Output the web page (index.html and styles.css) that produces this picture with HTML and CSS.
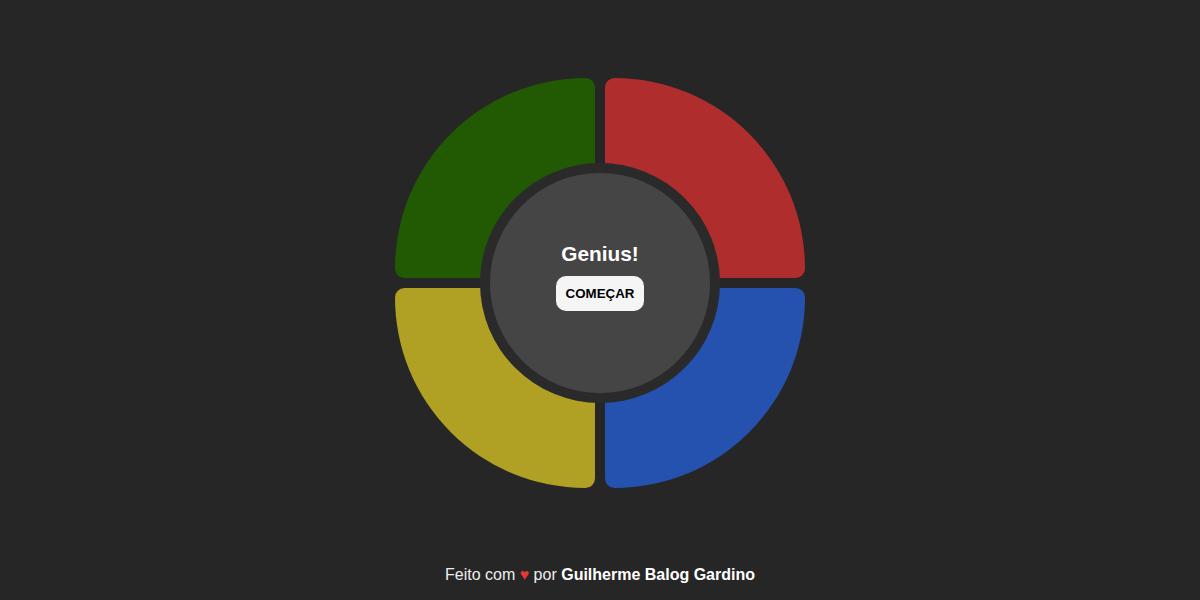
FILE: index.html
```html
<!DOCTYPE html>
<html lang="pt-BR">
<head>
<meta charset="utf-8">
<title>Genius</title>
<link rel="stylesheet" href="styles.css">
</head>
<body>
  <main class="game">
    <div class="pad pad-green"></div>
    <div class="pad pad-red"></div>
    <div class="pad pad-yellow"></div>
    <div class="pad pad-blue"></div>
    <div class="center">
      <div class="center-inner">
        <h1 class="title">Genius!</h1>
        <button class="start">COMEÇAR</button>
      </div>
    </div>
  </main>
  <footer class="footer">Feito com <span class="heart">♥</span> por <strong>Guilherme Balog Gardino</strong></footer>
</body>
</html>
```

FILE: styles.css
```css
* { box-sizing: border-box; }
html, body { margin: 0; padding: 0; }
body {
  background: #262626;
  font-family: "Liberation Sans", Arial, sans-serif;
  height: 600px;
  display: flex;
  flex-direction: column;
  align-items: center;
}
.game {
  margin-top: 78px;
  position: relative;
  display: grid;
  grid-template-columns: 200px 200px;
  grid-template-rows: 200px 200px;
  gap: 10px;
}
.pad { width: 200px; height: 200px; }
.pad-green { background: #215a02; border-radius: 200px 10px 10px 10px; }
.pad-red { background: #af2d2d; border-radius: 10px 200px 10px 10px; }
.pad-yellow { background: #b0a124; border-radius: 10px 10px 10px 200px; }
.pad-blue { background: #2452ae; border-radius: 10px 10px 200px 10px; }
.center {
  position: absolute;
  left: 85px;
  top: 85px;
  width: 240px;
  height: 240px;
  border-radius: 50%;
  background: #2a2a2a;
  padding: 10px;
}
.center-inner {
  width: 100%;
  height: 100%;
  border-radius: 50%;
  background: #454545;
  display: flex;
  flex-direction: column;
  align-items: center;
  justify-content: center;
  gap: 10px;
  padding-bottom: 14px;
}
.title {
  margin: 0;
  color: #fff;
  font-size: 20.8px;
  font-weight: bold;
  line-height: 24px;
}
.start {
  font-family: "Liberation Sans", Arial, sans-serif;
  font-size: 13.333px;
  font-weight: bold;
  line-height: normal;
  color: #000;
  background: #f5f5f5;
  border: none;
  border-radius: 10px;
  padding: 10px;
}
.footer {
  margin-top: auto;
  padding-bottom: 16px;
  color: #eee;
  font-size: 16px;
}
.footer strong { color: #fff; }
.heart { color: #e53935; }
```
